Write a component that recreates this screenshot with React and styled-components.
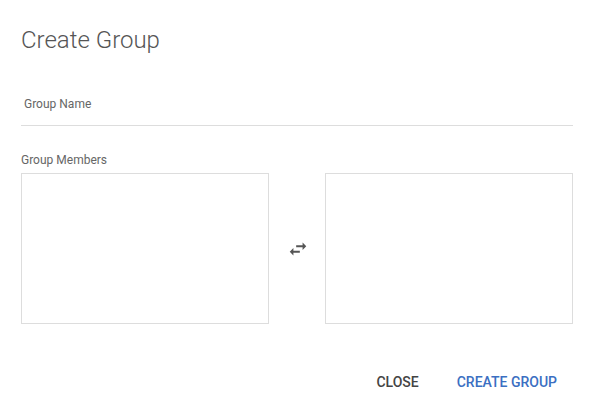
import React from "react";
import styled, { createGlobalStyle } from "styled-components";

const Global = createGlobalStyle`
  html, body { margin: 0; padding: 0; background: #fff; }
  body { font-family: Roboto, "Liberation Sans", sans-serif; }
`;

const Dialog = styled.div`
  width: 595px;
  height: 419px;
  box-sizing: border-box;
  padding: 24px 22px 0 21px;
  display: flex;
  flex-direction: column;
`;

const Title = styled.h2`
  margin: 0;
  font-size: 24px;
  font-weight: 300;
  color: #555;
  line-height: 32px;
`;

const NameField = styled.div`
  margin-top: 40px;
  border-bottom: 1px solid #ddd;
  padding: 0 0 13px 3px;
`;

const Label = styled.div`
  font-size: 12px;
  color: #666;
  line-height: 16px;
`;

const MembersLabel = styled(Label)`
  margin-top: 26px;
`;

const Members = styled.div`
  margin-top: 5px;
  display: grid;
  grid-template-columns: 248px 1fr 248px;
  align-items: center;
`;

const ListBox = styled.div`
  height: 151px;
  box-sizing: border-box;
  border: 1px solid #ddd;
`;

const Swap = styled.div`
  display: flex;
  justify-content: center;
  color: #555;
  padding-left: 1px;
`;

const Actions = styled.div`
  margin-top: 42px;
  display: flex;
  justify-content: flex-end;
  gap: 8px;
`;

const Button = styled.button`
  border: none;
  background: none;
  padding: 8px 16px;
  font-family: Roboto, "Liberation Sans", sans-serif;
  font-size: 14px;
  font-weight: 500;
  letter-spacing: 0;
  color: ${(p) => (p.$primary ? "#3b6fc2" : "#444")};
  cursor: pointer;
`;

const CloseButton = styled(Button)`
  margin-right: -2px;
`;

export default function App() {
  return (
    <>
      <Global />
      <Dialog>
        <Title>Create Group</Title>
        <NameField>
          <Label>Group Name</Label>
        </NameField>
        <MembersLabel>Group Members</MembersLabel>
        <Members>
          <ListBox />
          <Swap>
            <svg width="22" height="22" viewBox="0 0 24 24" fill="currentColor">
              <path d="M6.99 11L3 15l3.99 4v-3H14v-2H6.99v-3zM21 9l-3.99-4v3H10v2h7.01v3L21 9z" />
            </svg>
          </Swap>
          <ListBox />
        </Members>
        <Actions>
          <CloseButton>CLOSE</CloseButton>
          <Button $primary>CREATE GROUP</Button>
        </Actions>
      </Dialog>
    </>
  );
}
